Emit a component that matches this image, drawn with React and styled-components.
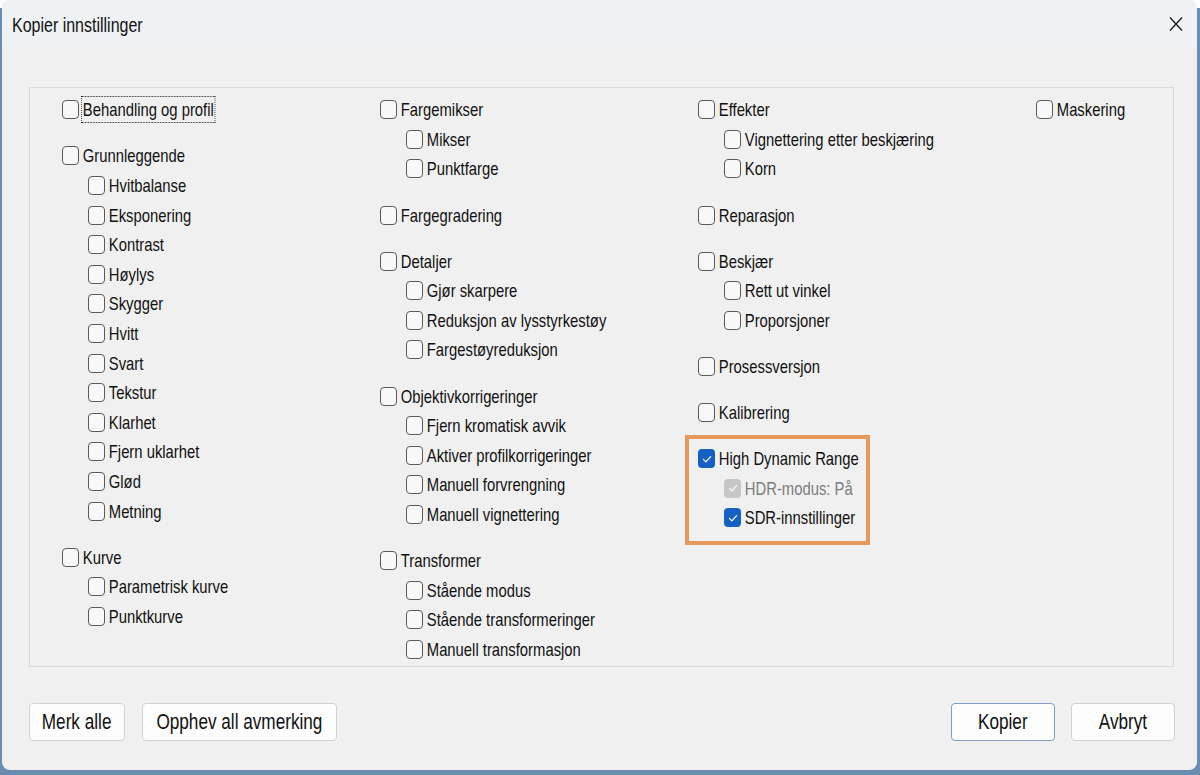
import React from 'react';
import styled, { createGlobalStyle } from 'styled-components';

const GlobalStyle = createGlobalStyle`
  html, body {
    margin: 0;
    padding: 0;
  }
  body {
    width: 1200px;
    height: 775px;
    overflow: hidden;
    background: linear-gradient(to bottom, #ffffff 0, #ffffff 8px, #6a8cb0 8px);
    font-family: "Liberation Sans", Arial, sans-serif;
    color: #111;
  }
`;

// the dialog font is a tall narrow one; squeeze Liberation Sans to its width
const narrow = `
  display: inline-block;
  transform: scaleX(0.78);
  white-space: nowrap;
`;

const Window = styled.div`
  margin: 0 3px 0 2px;
  height: 770px;
  border-radius: 8px;
  overflow: hidden;
  background: #f0f0f0;
  display: flex;
  flex-direction: column;
`;

const TitleBar = styled.div`
  height: 48px;
  flex: 0 0 48px;
  background: #eef2f5;
  display: flex;
  align-items: center;
  justify-content: space-between;
  padding-left: 10px;
`;

const Title = styled.div`
  ${narrow}
  transform-origin: left center;
  font-size: 20.5px;
  margin-top: 2px;
`;

const CloseButton = styled.div`
  width: 42px;
  height: 48px;
  display: flex;
  align-items: center;
  justify-content: center;
`;

const Content = styled.div`
  padding: 39px 23px 0 27px;
`;

const GroupBox = styled.div`
  height: 580px;
  box-sizing: border-box;
  border: 1px solid #dadada;
  padding: 7px 0 0 32px;
  display: grid;
  grid-template-columns: 318px 318px 338px auto;
  align-items: start;
`;

const Column = styled.div`
  display: flex;
  flex-direction: column;
  gap: 16.5px;
`;

const Group = styled.div`
  position: relative;
  display: flex;
  flex-direction: column;

  ${p => p.$highlight && `
    &::after {
      content: '';
      position: absolute;
      left: -13px;
      top: -9px;
      width: 185px;
      height: 110px;
      box-sizing: border-box;
      border: 4px solid #e8975a;
      pointer-events: none;
    }
  `}
`;

const Row = styled.div`
  height: 29.6px;
  display: flex;
  align-items: center;
  padding-left: ${p => (p.$child ? 26 : 0)}px;
`;

const Box = styled.div`
  width: 17px;
  height: 19px;
  box-sizing: border-box;
  border-radius: 4px;
  border: ${p => (p.$checked ? 'none' : '1px solid #5a5a5a')};
  background: ${p => (p.$checked ? (p.$disabled ? '#c6c6c6' : '#1660c4') : '#f8f8f8')};
  display: flex;
  align-items: center;
  justify-content: center;
  flex: 0 0 auto;
`;

const Label = styled.span`
  ${narrow}
  transform-origin: left center;
  font-size: 19px;
  margin-left: 3px;
  padding: 0 1px;
  line-height: 25px;
  color: ${p => (p.$disabled ? '#7c7c7c' : '#111')};
  outline: ${p => (p.$focused ? '1px dotted #222' : 'none')};
`;

const Footer = styled.div`
  display: flex;
  justify-content: space-between;
  padding: 36px 22px 0 27px;
`;

const ButtonGroup = styled.div`
  display: flex;
  gap: ${p => p.$gap}px;
`;

const Button = styled.div`
  height: 38px;
  width: ${p => p.$width}px;
  box-sizing: border-box;
  border-radius: 4px;
  border: 1px solid ${p => (p.$primary ? '#7d9dc4' : '#d2d2d2')};
  background: #fdfdfd;
  display: flex;
  align-items: center;
  justify-content: center;
  color: #111;

  span {
    ${narrow}
    font-size: 22px;
  }
`;

const columns = [
  [
    { label: 'Behandling og profil', focused: true },
    {
      label: 'Grunnleggende',
      children: ['Hvitbalanse', 'Eksponering', 'Kontrast', 'Høylys', 'Skygger', 'Hvitt', 'Svart', 'Tekstur', 'Klarhet', 'Fjern uklarhet', 'Glød', 'Metning'],
    },
    { label: 'Kurve', children: ['Parametrisk kurve', 'Punktkurve'] },
  ],
  [
    { label: 'Fargemikser', children: ['Mikser', 'Punktfarge'] },
    { label: 'Fargegradering' },
    { label: 'Detaljer', children: ['Gjør skarpere', 'Reduksjon av lysstyrkestøy', 'Fargestøyreduksjon'] },
    { label: 'Objektivkorrigeringer', children: ['Fjern kromatisk avvik', 'Aktiver profilkorrigeringer', 'Manuell forvrengning', 'Manuell vignettering'] },
    { label: 'Transformer', children: ['Stående modus', 'Stående transformeringer', 'Manuell transformasjon'] },
  ],
  [
    { label: 'Effekter', children: ['Vignettering etter beskjæring', 'Korn'] },
    { label: 'Reparasjon' },
    { label: 'Beskjær', children: ['Rett ut vinkel', 'Proporsjoner'] },
    { label: 'Prosessversjon' },
    { label: 'Kalibrering' },
    {
      label: 'High Dynamic Range',
      checked: true,
      highlight: true,
      children: [
        { label: 'HDR-modus: På', checked: true, disabled: true },
        { label: 'SDR-innstillinger', checked: true },
      ],
    },
  ],
  [{ label: 'Maskering' }],
];

const Check = () => (
  <svg width="12" height="12" viewBox="0 0 12 12">
    <polyline points="2.4,6.4 4.9,8.9 9.6,3.6" fill="none" stroke="#fff" strokeWidth="1.2" strokeLinecap="round" strokeLinejoin="round" />
  </svg>
);

const Checkbox = ({ item, child }) => {
  const it = typeof item === 'string' ? { label: item } : item;
  return (
    <Row $child={child}>
      <Box $checked={it.checked} $disabled={it.disabled}>
        {it.checked && <Check />}
      </Box>
      <Label $disabled={it.disabled} $focused={it.focused}>{it.label}</Label>
    </Row>
  );
};

const App = () => (
  <>
    <GlobalStyle />
    <Window>
      <TitleBar>
        <Title>Kopier innstillinger</Title>
        <CloseButton>
          <svg width="16" height="16" viewBox="0 0 16 16">
            <path d="M2 1.5 L14 14.5 M14 1.5 L2 14.5" stroke="#1a1a1a" strokeWidth="1.3" fill="none" />
          </svg>
        </CloseButton>
      </TitleBar>
      <Content>
        <GroupBox>
          {columns.map((col, i) => (
            <Column key={i}>
              {col.map(group => (
                <Group key={group.label} $highlight={group.highlight}>
                  <Checkbox item={group} />
                  {(group.children || []).map((c, j) => (
                    <Checkbox key={j} item={c} child />
                  ))}
                </Group>
              ))}
            </Column>
          ))}
        </GroupBox>
      </Content>
      <Footer>
        <ButtonGroup $gap={17}>
          <Button $width={96}><span>Merk alle</span></Button>
          <Button $width={195}><span>Opphev all avmerking</span></Button>
        </ButtonGroup>
        <ButtonGroup $gap={16}>
          <Button $primary $width={104}><span>Kopier</span></Button>
          <Button $width={104}><span>Avbryt</span></Button>
        </ButtonGroup>
      </Footer>
    </Window>
  </>
);

export default App;
